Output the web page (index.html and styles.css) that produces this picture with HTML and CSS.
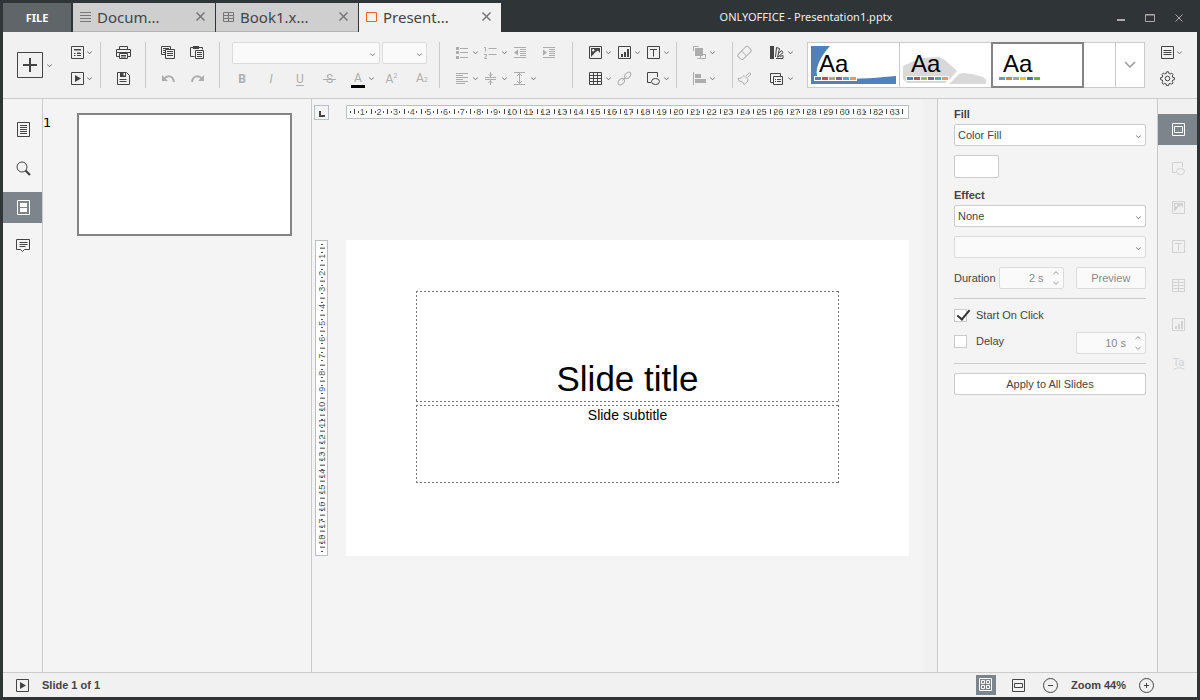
FILE: index.html
```html
<!DOCTYPE html>
<html lang="en">
<head>
<meta charset="utf-8">
<title>ONLYOFFICE - Presentation1.pptx</title>
<link rel="stylesheet" href="styles.css">
</head>
<body>
<svg class="sprite" aria-hidden="true">
  <symbol id="chev" viewBox="0 0 5 5"><path d="M0 1.3L2.5 3.8L5 1.3"/></symbol>
  <symbol id="close" viewBox="0 0 9 9"><path d="M.5.5L8.500 8.500M8.500.5L.5 8.500"/></symbol>
  <symbol id="slide-new" viewBox="0 0 15 15"><path d="M1.500 1.500h12v12h-12z"/><path d="M4 5h7M4 8.500h1.500M7 8.500h4M4 10.500h1.500M7 10.500h4"/><path d="M4 4.500h7M7 8h3"/></symbol>
  <symbol id="play" viewBox="0 0 15 15"><path d="M1.500 1.500h12v12h-12z"/><path class="solid" d="M5 4l6 3.500l-6 3.500z"/></symbol>
  <symbol id="print" viewBox="0 0 15 15"><path d="M3.500 4.500v-3h8v3M3.500 11.500h-3v-7h14v7h-3M3.500 8.500h8v5h-8zM5 10.500h5M5 12h5M0 7.500h15"/></symbol>
  <symbol id="save" viewBox="0 0 15 15"><path d="M1.500 1.500h9l3 3v9h-12zM3.500 8.500h7M3.500 10.500h7"/><path class="solid" d="M4 1h6v5h-6z"/><path class="paper" d="M7.500 2h1.500v2.500h-1.500z"/></symbol>
  <symbol id="copy" viewBox="0 0 15 15"><path d="M4.500 9.500h-4v-8h9v2.500M2 3.500h6M2 5.500h2M2 7.500h2M4.500 4.500h9v9h-9zM6 6.500h6M6 8.500h6M6 10.500h6"/></symbol>
  <symbol id="paste" viewBox="0 0 15 15"><path d="M4.500 11.500h-4v-9h12v2M5.500 5.500h8v8h-8zM7 7.500h5M7 9.500h5M7 11.500h5"/><path class="solid" d="M3 1h6v3h-6z"/></symbol>
  <symbol id="undo" viewBox="0 0 15 15"><path d="M3 8c3-4 9-4 10 3" stroke-width="2"/><path class="solid" d="M1 4v6h6z"/></symbol>
  <symbol id="redo" viewBox="0 0 15 15"><path d="M12 8c-3-4-9-4-10 3" stroke-width="2"/><path class="solid" d="M14 4v6h-6z"/></symbol>
  <symbol id="bullets" viewBox="0 0 15 15"><path d="M6 3.500h8M6 7.500h8M6 12.500h8"/><path class="solid" d="M2 2h3v3h-3zM2 6h3v3h-3zM2 11h3v3h-3z"/></symbol>
  <symbol id="numbers" viewBox="0 0 15 15"><path d="M5.500 3.500h8M5.500 9.500h8M1 2.500h1.500v4M1 9.500h2.500v1.500l-2 2v.5h2.500"/></symbol>
  <symbol id="outdent" viewBox="0 0 15 15"><path d="M2 2.500h12M8 4.500h6M8 6.500h6M8 8.500h6M8 10.500h6M2 12.500h12"/><path class="solid" d="M6 4.500v6l-4-3z"/></symbol>
  <symbol id="indent" viewBox="0 0 15 15"><path d="M2 2.500h12M8 4.500h6M8 6.500h6M8 8.500h6M8 10.500h6M2 12.500h12"/><path class="solid" d="M2 4.500v6l4-3z"/></symbol>
  <symbol id="align" viewBox="0 0 15 15"><path d="M2 2.500h12M2 4.500h7M2 6.500h12M2 8.500h7M2 10.500h12M2 12.500h9"/></symbol>
  <symbol id="valign" viewBox="0 0 15 15"><path d="M2 6.500h11M2 8.500h11M7.500 1v5M7.500 9v5M5.500 3l2 2l2-2M5.500 12l2-2l2 2"/></symbol>
  <symbol id="spacing" viewBox="0 0 15 15"><path d="M2 1.500h11M2 13.500h11M7.500 2.500v10M5 5l2.500-2.500l2.500 2.500M5 10l2.500 2.500l2.500-2.500"/></symbol>
  <symbol id="image" viewBox="0 0 15 15"><path d="M1.500 1.500h12v12h-12z"/><path class="solid" d="M3 3h9v5l-2-2.500l-2.500 1.500l-4.500 5z"/><circle class="paper" cx="5.200" cy="5.200" r="1.200"/></symbol>
  <symbol id="chart" viewBox="0 0 15 15"><path d="M1.500 1.500h12v12h-12z"/><path class="solid" d="M4 9h2v3h-2zM7 7h2v5h-2zM10 4h2v8h-2z"/></symbol>
  <symbol id="text" viewBox="0 0 15 15"><path d="M1.500 1.500h12v12h-12zM4 4.500h7M7.500 4.500v7"/></symbol>
  <symbol id="table" viewBox="0 0 15 15"><path d="M1.500 1.500h12v12h-12zM1 4.500h13M1 7.500h13M1 10.500h13M5.500 1.500v12M9.500 1.500v12"/></symbol>
  <symbol id="table2" viewBox="0 0 15 15"><path d="M1.500 1.500h12v12h-12zM1 4.500h13M1 7.500h13M1 10.500h13M7.500 1.500v12"/></symbol>
  <symbol id="link" viewBox="0 0 15 15"><ellipse cx="4.300" cy="10.700" rx="3.700" ry="2.500" transform="rotate(-45 4.300 10.700)"/><ellipse cx="10.700" cy="4.300" rx="3.700" ry="2.500" transform="rotate(-45 10.700 4.300)"/><path d="M5.500 9.500l4-4"/></symbol>
  <symbol id="shape" viewBox="0 0 15 15"><path d="M5 11.500h-3.500v-10h10v4.500"/><ellipse cx="9.500" cy="10.500" rx="4" ry="3"/></symbol>
  <symbol id="arrange" viewBox="0 0 15 15"><path d="M1.500 6v-4.500h5M13.500 9v4.500h-5M13.500 9.500h-3M5.500 13.500h3v-3"/><path class="solid" d="M3 3h8v8h-8z"/></symbol>
  <symbol id="align-obj" viewBox="0 0 15 15"><path d="M1.500 1v13"/><path class="solid" d="M3 3h6v4h-6zM3 8h11v4h-11z"/></symbol>
  <symbol id="eraser" viewBox="0 0 15 15"><rect x="0.500" y="4.500" width="14" height="7" rx="2" transform="rotate(-45 7.500 8)"/><path d="M4.500 6l5 5"/></symbol>
  <symbol id="brush" viewBox="0 0 15 15"><path d="M9 5l3.500-3.500l1.500 1.500l-3.500 3.500M7 4.500l4 4c0 2-2 4-4 5l-1.500-2.500l-4-1.500l-.5-2c3 0 4-1 6-3z"/></symbol>
  <symbol id="colors" viewBox="0 0 15 15"><path class="solid" d="M1 1h4v13h-4z"/><path d="M6.500 12l1-9.500l3 1l-2 9M9 9l3.500-3.500l1.500 2l-5 4.500M7 13.500h7v-3l-3.500 1"/></symbol>
  <symbol id="size" viewBox="0 0 15 15"><path d="M4 11.500h-2.500v-9h10v2.500M4.500 5.500h9v8h-9zM6 8.500h1M8 8.500h4M6 10.500h1M8 10.500h4"/></symbol>
  <symbol id="lines" viewBox="0 0 15 15"><path d="M1.500 1.500h12v12h-12zM3.500 5.500h8M3.500 7.500h8M3.500 9.500h8"/></symbol>
  <symbol id="gear" viewBox="0 0 15 15"><circle cx="7.500" cy="7.500" r="2.300"/><path d="M6.500.8h2l.4 1.700l1.300.5l1.500-.9l1.400 1.400l-.9 1.500l.5 1.300l1.700.4v2l-1.700.4l-.5 1.300l.9 1.500l-1.400 1.400l-1.500-.9l-1.300.5l-.4 1.700h-2l-.4-1.700l-1.300-.5l-1.500.9l-1.400-1.400l.9-1.500l-.5-1.300l-1.700-.4v-2l1.700-.4l.5-1.300l-.9-1.500l1.400-1.400l1.500.9l1.300-.5z"/></symbol>
  <symbol id="doc" viewBox="0 0 15 15"><path d="M1.500.5h12v14h-12zM4 3.500h7M4 5.500h7M4 7.500h7M4 9.500h7M4 11.500h7"/></symbol>
  <symbol id="search" viewBox="0 0 15 15"><circle cx="6" cy="6" r="5"/><path d="M9.500 9.500l4.500 4.500" stroke-width="2.200"/></symbol>
  <symbol id="slides" viewBox="0 0 15 15"><path d="M1.500.5h12v14h-12z"/><path class="solid" d="M4 3h7v4h-7zM4 8h7v4h-7z"/></symbol>
  <symbol id="comment" viewBox="0 0 15 15"><path d="M.5.500h13v10h-5l-2 2l-2-2h-4zM3.500 3.500h8M3.500 5.500h8M3.500 7.500h6"/></symbol>
  <symbol id="slide-set" viewBox="0 0 15 15"><path d="M1.500 1.500h12v12h-12zM3.500 4.500h8v6h-8z"/></symbol>
  <symbol id="fit" viewBox="0 0 15 15"><path d="M1.500 1.500h12v12h-12zM3.500 5.500h8v4h-8z"/></symbol>
  <symbol id="grid4" viewBox="0 0 15 15"><path d="M1.500 1.500h12v12h-12zM3.500 3.500h3v3h-3zM8.500 3.500h3v3h-3zM3.500 8.500h3v3h-3zM8.500 8.500h3v3h-3z"/></symbol>
  <symbol id="minus" viewBox="0 0 15 15"><circle cx="7.500" cy="7.500" r="7"/><path d="M5 7.500h5"/></symbol>
  <symbol id="plus" viewBox="0 0 15 15"><circle cx="7.500" cy="7.500" r="7"/><path d="M5 7.500h5M7.500 5v5"/></symbol>
</svg>

<header class="titlebar">
  <nav class="tabs">
    <button class="file">FILE</button>
    <div class="tab"><svg class="tab-icon" viewBox="0 0 11 11"><path d="M0 .5h11M0 3.500h11M0 6.500h11M0 9.500h11"/></svg><span class="tab-name">Docum...</span><button class="tab-close" aria-label="Close"><svg><use href="#close"/></svg></button></div>
    <div class="tab"><svg class="tab-icon" viewBox="0 0 11 11"><path d="M.5.5h10v9h-10zM0 3.500h11M0 6.500h11M5.500.5v9"/></svg><span class="tab-name">Book1.x...</span><button class="tab-close" aria-label="Close"><svg><use href="#close"/></svg></button></div>
    <div class="tab active"><svg class="tab-icon" viewBox="0 0 11 11"><path d="M.5.5h10v9h-10z"/></svg><span class="tab-name">Present...</span><button class="tab-close" aria-label="Close"><svg><use href="#close"/></svg></button></div>
  </nav>
  <h1 class="window-title">ONLYOFFICE - Presentation1.pptx</h1>
  <div class="window-buttons">
    <button aria-label="Minimize"><svg viewBox="0 0 10 10"><path d="M1 7h8" stroke-width="2"/></svg></button>
    <button aria-label="Maximize"><svg viewBox="0 0 10 10"><path d="M.5 1.500h9v7h-9zM0 2h10"/></svg></button>
    <button aria-label="Close window"><svg viewBox="0 0 10 10"><path d="M1.500 1.500l7 7M8.500 1.500l-7 7"/></svg></button>
  </div>
</header>

<div class="toolbar">
  <button class="add" aria-label="Add slide"><svg class="add-icon" viewBox="0 0 26 26"><path d="M.5.5h25v25h-25z"/><path d="M6 13h14M13 6v14" stroke-width="2"/></svg><svg class="chev"><use href="#chev"/></svg></button>
  <div class="group g-slide">
    <button aria-label="Layout"><svg class="icon"><use href="#slide-new"/></svg><svg class="chev"><use href="#chev"/></svg></button>
    <button aria-label="Preview show"><svg class="icon"><use href="#play"/></svg><svg class="chev"><use href="#chev"/></svg></button>
  </div>
  <i class="sep"></i>
  <div class="group g-file">
    <button aria-label="Print"><svg class="icon"><use href="#print"/></svg></button>
    <button aria-label="Save"><svg class="icon"><use href="#save"/></svg></button>
  </div>
  <i class="sep"></i>
  <div class="group g-clip">
    <button aria-label="Copy"><svg class="icon"><use href="#copy"/></svg></button>
    <button aria-label="Paste"><svg class="icon"><use href="#paste"/></svg></button>
    <button class="off" aria-label="Undo"><svg class="icon"><use href="#undo"/></svg></button>
    <button class="off" aria-label="Redo"><svg class="icon"><use href="#redo"/></svg></button>
  </div>
  <i class="sep"></i>
  <div class="font-group">
    <div class="combos">
      <div class="combo font-name"><input type="text" aria-label="Font" disabled><svg class="chev"><use href="#chev"/></svg></div>
      <div class="combo font-size"><input type="text" aria-label="Font size" disabled><svg class="chev"><use href="#chev"/></svg></div>
    </div>
    <div class="letters">
      <button class="bold">B</button><button class="ital">I</button><button class="under">U</button><button class="strike"><span>S</span></button><button class="color"><span>A</span><svg class="chev"><use href="#chev"/></svg></button><button class="script">A<small class="sup">2</small></button><button class="script">A<small>2</small></button>
    </div>
  </div>
  <i class="sep"></i>
  <div class="group g-para off">
    <button aria-label="Bullets"><svg class="icon"><use href="#bullets"/></svg><svg class="chev"><use href="#chev"/></svg></button>
    <button aria-label="Numbering"><svg class="icon"><use href="#numbers"/></svg><svg class="chev"><use href="#chev"/></svg></button>
    <button aria-label="Decrease indent"><svg class="icon"><use href="#outdent"/></svg></button>
    <button aria-label="Increase indent"><svg class="icon"><use href="#indent"/></svg></button>
    <button aria-label="Align"><svg class="icon"><use href="#align"/></svg><svg class="chev"><use href="#chev"/></svg></button>
    <button aria-label="Vertical align"><svg class="icon"><use href="#valign"/></svg><svg class="chev"><use href="#chev"/></svg></button>
    <button aria-label="Line spacing"><svg class="icon"><use href="#spacing"/></svg><svg class="chev"><use href="#chev"/></svg></button>
  </div>
  <i class="sep"></i>
  <div class="group g-insert">
    <button aria-label="Image"><svg class="icon"><use href="#image"/></svg><svg class="chev"><use href="#chev"/></svg></button>
    <button aria-label="Chart"><svg class="icon"><use href="#chart"/></svg><svg class="chev"><use href="#chev"/></svg></button>
    <button aria-label="Text"><svg class="icon"><use href="#text"/></svg><svg class="chev"><use href="#chev"/></svg></button>
    <button aria-label="Table"><svg class="icon"><use href="#table"/></svg><svg class="chev"><use href="#chev"/></svg></button>
    <button class="off" aria-label="Link"><svg class="icon"><use href="#link"/></svg></button>
    <button aria-label="Shape"><svg class="icon"><use href="#shape"/></svg><svg class="chev"><use href="#chev"/></svg></button>
  </div>
  <i class="sep"></i>
  <div class="group g-arrange off">
    <button aria-label="Arrange"><svg class="icon"><use href="#arrange"/></svg><svg class="chev"><use href="#chev"/></svg></button>
    <button aria-label="Align shape"><svg class="icon"><use href="#align-obj"/></svg><svg class="chev"><use href="#chev"/></svg></button>
  </div>
  <i class="sep sep-short"></i>
  <div class="group g-style">
    <button class="off" aria-label="Clear style"><svg class="icon"><use href="#eraser"/></svg></button>
    <button aria-label="Color scheme"><svg class="icon"><use href="#colors"/></svg><svg class="chev"><use href="#chev"/></svg></button>
    <button class="off" aria-label="Copy style"><svg class="icon"><use href="#brush"/></svg></button>
    <button aria-label="Slide size"><svg class="icon"><use href="#size"/></svg><svg class="chev"><use href="#chev"/></svg></button>
  </div>
  <div class="gallery">
    <button class="theme theme-wave"><span class="aa">Aa</span>
      <span class="swatches office"><i></i><i></i><i></i><i></i><i></i><i></i></span>
      <svg class="art" viewBox="0 0 85 38"><path fill="#4f81bd" d="M0 0h19C8 12 3 25 7 32c14 3 58 0 78-2v8H0z"/></svg>
    </button>
    <button class="theme theme-stone"><span class="aa">Aa</span>
      <span class="swatches office"><i></i><i></i><i></i><i></i><i></i><i></i></span>
      <svg class="art" viewBox="0 0 85 38"><path fill="#d9d9d9" d="M0 20l11-5l9-3l16-1l6 3l12 11l-7 8l-5 4H4l-4-4zM46 38l10-10l4-1l9 1l11 3q4 2 3 7z"/></svg>
    </button>
    <button class="theme selected"><span class="aa">Aa</span>
      <span class="swatches modern"><i></i><i></i><i></i><i></i><i></i><i></i></span>
    </button>
    <span class="gallery-rest"></span>
    <button class="gallery-more" aria-label="More themes"><svg viewBox="0 0 12 8"><path d="M1 1l5 5l5-5" stroke-width="1.500"/></svg></button>
  </div>
  <div class="group g-view">
    <button aria-label="View settings"><svg class="icon"><use href="#lines"/></svg><svg class="chev"><use href="#chev"/></svg></button>
    <button aria-label="Advanced settings"><svg class="icon"><use href="#gear"/></svg></button>
  </div>
</div>

<main class="work">
  <nav class="side left">
    <button aria-label="File"><svg class="icon"><use href="#doc"/></svg></button>
    <button aria-label="Search"><svg class="icon"><use href="#search"/></svg></button>
    <button class="on" aria-label="Slides"><svg class="icon"><use href="#slides"/></svg></button>
    <button aria-label="Comments"><svg class="icon"><use href="#comment"/></svg></button>
  </nav>
  <section class="thumbs"><span class="thumb-no">1</span><button class="thumb" aria-label="Slide 1"></button></section>

  <section class="editor">
    <div class="canvas">
      <button class="tab-stop" aria-label="Tab stop"><svg viewBox="0 0 13 13"><path d="M5 5v5h5" stroke-width="2"/></svg></button>
      <div class="ruler across"><span>1</span><span>2</span><span>3</span><span>4</span><span>5</span><span>6</span><span>7</span><span>8</span><span>9</span><span>10</span><span>11</span><span>12</span><span>13</span><span>14</span><span>15</span><span>16</span><span>17</span><span>18</span><span>19</span><span>20</span><span>21</span><span>22</span><span>23</span><span>24</span><span>25</span><span>26</span><span>27</span><span>28</span><span>29</span><span>30</span><span>31</span><span>32</span><span>33</span></div>
      <div class="stage">
        <div class="ruler down"><span>1</span><span>2</span><span>3</span><span>4</span><span>5</span><span>6</span><span>7</span><span>8</span><span>9</span><span>10</span><span>11</span><span>12</span><span>13</span><span>14</span><span>15</span><span>16</span><span>17</span><span>18</span></div>
        <article class="slide">
          <h2 class="holder title">Slide title</h2>
          <p class="holder subtitle">Slide subtitle</p>
        </article>
      </div>
    </div>
    <div class="scroll"></div>
  </section>

  <aside class="settings">
    <label class="head" for="fill">Fill</label>
    <div class="select"><select id="fill"><option>Color Fill</option></select><svg class="chev"><use href="#chev"/></svg></div>
    <button class="swatch" aria-label="Fill color"></button>
    <label class="head effect" for="effect">Effect</label>
    <div class="select"><select id="effect"><option>None</option></select><svg class="chev"><use href="#chev"/></svg></div>
    <div class="select variant"><select aria-label="Effect variant" disabled><option></option></select><svg class="chev"><use href="#chev"/></svg></div>
    <div class="row duration"><label for="duration">Duration</label><div class="spin short"><input id="duration" type="text" value="2 s" disabled><svg viewBox="0 0 6 14"><path d="M.5 3L3 .7L5.500 3M.5 11L3 13.300L5.500 11"/></svg></div><button class="push" disabled>Preview</button></div>
    <hr>
    <label class="check"><input type="checkbox" checked>Start On Click</label>
    <div class="row delay"><label class="check"><input type="checkbox">Delay</label><div class="spin"><input type="text" aria-label="Delay time" value="10 s" disabled><svg viewBox="0 0 6 14"><path d="M.5 3L3 .7L5.500 3M.5 11L3 13.300L5.500 11"/></svg></div></div>
    <hr>
    <button class="push apply">Apply to All Slides</button>
  </aside>

  <nav class="side right">
    <button class="on" aria-label="Slide settings"><svg class="icon"><use href="#slide-set"/></svg></button>
    <button aria-label="Shape settings"><svg class="icon"><use href="#shape"/></svg></button>
    <button aria-label="Image settings"><svg class="icon"><use href="#image"/></svg></button>
    <button aria-label="Text settings"><svg class="icon"><use href="#text"/></svg></button>
    <button aria-label="Table settings"><svg class="icon"><use href="#table2"/></svg></button>
    <button aria-label="Chart settings"><svg class="icon"><use href="#chart"/></svg></button>
    <button class="text-art">Ta<svg viewBox="0 0 12 3"><path d="M.5 2.500q5.500-3.500 11 0"/></svg></button>
  </nav>
</main>

<footer class="status">
  <button aria-label="Start show"><svg class="icon"><use href="#play"/></svg></button>
  <span class="page-no">Slide 1 of 1</span>
  <button class="fit on" aria-label="Fit slide"><svg class="icon"><use href="#grid4"/></svg></button>
  <button class="fit-width" aria-label="Fit width"><svg class="icon"><use href="#fit"/></svg></button>
  <button aria-label="Zoom out"><svg class="icon"><use href="#minus"/></svg></button>
  <span class="zoom">Zoom 44%</span>
  <button aria-label="Zoom in"><svg class="icon"><use href="#plus"/></svg></button>
</footer>
</body>
</html>
```
FILE: styles.css
```css
* { box-sizing: border-box; }

body {
  margin: 0;
  height: 100vh;
  padding: 3px;
  display: flex;
  flex-direction: column;
  background: #2f3437;
  color: #444;
  font: 11px/16px "Liberation Sans", Arial, sans-serif;
}

button {
  margin: 0;
  padding: 0;
  border: 0;
  background: none;
  color: inherit;
  font: inherit;
  flex: none;
}

svg {
  fill: none;
  stroke: currentColor;
  stroke-width: 1;
  display: block;
  flex: none;
}

.sprite { display: none; }
.solid { fill: currentColor; stroke: none; }
.paper { fill: #f1f1f1; stroke: none; }
.icon { width: 15px; height: 15px; }
.chev { width: 5px; height: 5px; color: #777; }
.off { color: #adadad; }

/* Title bar */
.titlebar {
  height: 29px;
  flex: none;
  display: flex;
  align-items: stretch;
  font-family: "Noto Sans", sans-serif;
}
.tabs { display: flex; gap: 1px; }
.file {
  width: 68px;
  margin-right: 1px;
  background: #5f6569;
  color: #fff;
  font-size: 11px;
  font-weight: 700;
  line-height: 28px;
}
.tab {
  width: 142px;
  display: flex;
  align-items: center;
  padding: 0 10px 0 7px;
  background: #cfcfcf;
  border-bottom: 1px solid #b5b5b5;
}
.tab.active { background: #f1f1f1; border-color: #f1f1f1; }
.tab-icon { width: 11px; height: 11px; color: #777; }
.active .tab-icon { color: #e2662b; }
.tab-name { flex: 1; margin-left: 6px; font-size: 15px; line-height: 28px; }
.tab-close { color: #777; padding-bottom: 2px; }
.tab-close svg { width: 9px; height: 9px; stroke-width: 1.5; }
.window-title {
  flex: 1;
  margin: 0;
  padding-right: 5px;
  text-align: center;
  color: #eee;
  font-size: 11px;
  font-weight: 400;
  line-height: 28px;
}
.window-buttons { display: flex; align-items: center; gap: 19px; padding-right: 13px; color: #aaa; }
.window-buttons svg { width: 10px; height: 10px; }

/* Toolbar */
.toolbar {
  height: 67px;
  flex: none;
  display: flex;
  align-items: flex-start;
  padding: 10px 15px 0 14px;
  background: #f1f1f1;
  border-bottom: 1px solid #cbcbcb;
}
.add { display: flex; align-items: center; gap: 4px; height: 46px; width: 53px; }
.add-icon { width: 26px; height: 26px; }
.group { display: grid; grid-auto-rows: 21px; row-gap: 5px; flex: none; }
.group button { display: flex; align-items: center; gap: 4px; }
.group .off, .font-group { color: #adadad; }
.sep { width: 1px; height: 46px; background: #cbcbcb; flex: none; }
.g-slide { width: 30px; }
.g-slide button { gap: 2px; }
.g-file { width: 29px; margin-left: 15px; }
.g-clip { grid-template-columns: 29px 29px; margin: 0 0 0 15px; }
.font-group { width: 195px; margin: 0 12px; }
.combos { display: flex; gap: 2px; }
.combo { position: relative; height: 22px; }
.font-name { flex: 1; }
.font-size { width: 45px; }
.combo input {
  width: 100%;
  height: 22px;
  border: 1px solid #dcdcdc;
  border-radius: 2px;
  background: #fafafa;
}
.combo .chev { position: absolute; right: 5px; top: 10px; }
.letters {
  display: flex;
  padding-top: 4px;
  font: 12px/20px Roboto, sans-serif;
}
.letters button { width: 29px; height: 21px; padding-right: 9px; }
.letters .bold { font-weight: 700; }
.letters .ital { font-style: italic; }
.letters .under { text-decoration: underline; text-underline-offset: 2px; }
.strike span {
  display: block;
  width: 13px;
  margin-left: 4px;
  background: linear-gradient(#adadad, #adadad) 0 10px / 100% 1px no-repeat;
}
.letters .color { display: flex; align-items: center; gap: 4px; padding: 0; margin-left: 3px; }
.color span { width: 14px; height: 18px; line-height: 18px; border-bottom: 3px solid #000; }
.color span { height: 19px; }
.letters .script { padding-right: 6px; }
.letters .script:last-child { width: 26px; padding-right: 0; }
.letters small { font-size: 7px; }
.letters .sup { vertical-align: super; line-height: 8px; }
.g-para { grid-template-columns: repeat(4, 29px); margin: 0 2px 0 14px; }
.g-insert { grid-template-columns: repeat(3, 29px); margin: 0 1px 0 15px; }
.g-insert button, .g-arrange button { gap: 3px; }
.g-arrange { width: 40px; margin-left: 15px; }
.g-style { grid-template-columns: 32px 29px; margin-left: 4px; }
.gallery {
  flex: 1;
  height: 46px;
  margin: 0 15px 0 9px;
  display: flex;
  background: #fff;
  border: 1px solid #cbcbcb;
}
.theme { position: relative; width: 92px; height: 44px; border-right: 1px solid #cbcbcb; }
.theme.selected { width: 91px; outline: 2px solid #848484; outline-offset: -1px; border: 0; }
.theme .art { position: absolute; left: 3px; top: 3px; width: 85px; height: 38px; stroke: none; }
.aa {
  position: absolute;
  z-index: 1;
  left: 11px;
  top: 7px;
  color: #000;
  font-size: 24px;
  line-height: 28px;
}
.swatches {
  position: absolute;
  z-index: 1;
  left: 6px;
  top: 33px;
  display: flex;
  gap: 1px;
  padding: 1px;
  background: #fff;
}
.swatches i { width: 6px; height: 3px; background: #4f81bd; }
.swatches i:nth-child(2) { background: #c0504d; }
.swatches i:nth-child(3) { background: #9bbb59; }
.swatches i:nth-child(4) { background: #8064a2; }
.swatches i:nth-child(5) { background: #4bacc6; }
.swatches i:nth-child(6) { background: #f79646; }
.modern i { background: #5b9bd5; }
.modern i:nth-child(2) { background: #ed7d31; }
.modern i:nth-child(3) { background: #a5a5a5; }
.modern i:nth-child(4) { background: #ffc000; }
.modern i:nth-child(5) { background: #4472c4; }
.modern i:nth-child(6) { background: #70ad47; }
.gallery-rest { flex: 1; border-right: 1px solid #cbcbcb; }
.gallery-more { width: 28px; display: flex; align-items: center; justify-content: center; color: #999; }
.gallery-more svg { width: 12px; height: 8px; }
.g-view { width: 22px; }
.g-view button { gap: 2px; }

/* Work area */
.work { flex: 1; min-height: 0; display: flex; background: #f4f4f4; }
.side { width: 40px; flex: none; display: flex; flex-direction: column; gap: 8px; padding-top: 15px; }
.side button { height: 31px; display: flex; align-items: center; justify-content: center; padding-left: 2px; }
.side .on, .status .on { background: #7d858c; color: #fff; }
.side.left { border-right: 1px solid #cbcbcb; }
.side.right { border-left: 1px solid #cbcbcb; background: #f1f1f1; color: #d2d2d2; }
.side .text-art { flex-direction: column; font-size: 11px; line-height: 10px; }
.text-art svg { width: 12px; height: 3px; }
.thumbs {
  width: 269px;
  flex: none;
  display: flex;
  align-items: flex-start;
  padding: 14px 19px 0 0;
  border-right: 1px solid #cbcbcb;
}
.thumb-no { width: 34px; color: #000; font: 13px/20px "DejaVu Sans", sans-serif; }
.thumb { flex: 1; aspect-ratio: 215 / 123; background: #fff; border: 2px solid #848484; }

/* Editor */
.editor { flex: 1; min-width: 0; display: flex; }
.scroll { width: 14px; background: #f1f1f1; }
.canvas {
  flex: 1;
  min-width: 0;
  display: grid;
  grid-template: 19px 1fr / 32px 1fr;
  padding: 6px 14px 0 2px;
}
.tab-stop { width: 15px; height: 15px; border: 1px solid #bbbec2; }
.tab-stop svg { width: 13px; height: 13px; }
.stage {
  grid-column: 1 / 3;
  align-self: center;
  display: grid;
  grid-template-columns: 32px 1fr;
}
.ruler { position: relative; display: grid; background: #fff; border: 1px solid #bbbec2; color: #555; font-size: 9px; line-height: 12px; }
.ruler span { display: flex; align-items: center; justify-content: center; position: relative; }
.ruler::before, .ruler::after, .ruler span::before, .ruler span:last-child::after { content: ""; position: absolute; background: #444; }
.across { height: 14px; grid-auto-flow: column; grid-auto-columns: minmax(0, 1fr); padding: 0 5px 0 7px; }
.across span {
  background: linear-gradient(90deg, transparent 4px, #555 4px, #555 5px, transparent 5px, transparent 12px, #555 12px, #555 13px, transparent 13px) 0 5px / 100% 2px no-repeat;
}
.across::before { left: 3px; top: 5px; width: 1px; height: 2px; }
.across::after { display: none; }
.across span::before { left: 0; top: 3px; width: 1px; height: 5px; }
.across span:last-child::after { right: 0; top: 3px; width: 1px; height: 5px; }
.down { width: 13px; margin-left: 1px; grid-auto-rows: minmax(0, 1fr); padding: 7px 0; }
.down span {
  writing-mode: vertical-rl;
  transform: rotate(180deg);
  background: linear-gradient(transparent 4px, #555 4px, #555 5px, transparent 5px, transparent 12px, #555 12px, #555 13px, transparent 13px) 5px 0 / 2px 100% no-repeat;
}
.down::before { left: 5px; top: 3px; width: 2px; height: 1px; }
.down::after { left: 5px; bottom: 3px; width: 2px; height: 1px; }
.down span::before { left: 3px; bottom: 0; width: 5px; height: 1px; }
.down span:last-child::after { left: 3px; top: 0; width: 5px; height: 1px; }
.slide {
  aspect-ratio: 563 / 316;
  display: flex;
  flex-direction: column;
  gap: 3px;
  padding: 51px 70px 73px;
  background: #fff;
}
.holder {
  margin: 0;
  padding: 1px;
  color: #000;
  text-align: center;
  font-weight: 400;
  background:
    repeating-linear-gradient(90deg, #777 0 2px, transparent 2px 4px) top / 100% 1px no-repeat,
    repeating-linear-gradient(90deg, #777 0 2px, transparent 2px 4px) bottom / 100% 1px no-repeat,
    repeating-linear-gradient(#777 0 2px, transparent 2px 4px) left / 1px 100% no-repeat,
    repeating-linear-gradient(#777 0 2px, transparent 2px 4px) right / 1px 100% no-repeat;
}
.title { flex: 111; display: flex; align-items: flex-end; justify-content: center; font-size: 35px; line-height: 44px; }
.subtitle { flex: 78; font-size: 14px; line-height: 18px; }

/* Slide settings */
.settings {
  width: 220px;
  flex: none;
  display: flex;
  flex-direction: column;
  padding: 7px 11px 0 16px;
  border-left: 1px solid #cbcbcb;
}
.head { font-weight: 700; line-height: 16px; margin-bottom: 2px; }
.effect { margin-top: 9px; }
.select { position: relative; }
.select select {
  width: 100%;
  height: 22px;
  display: block;
  padding: 0 3px;
  appearance: none;
  border: 1px solid #cbcbcb;
  border-radius: 2px;
  background: #fff;
  color: #444;
  font: inherit;
}
.select .chev { position: absolute; right: 5px; top: 10px; }
.variant { margin-top: 9px; }
.select select:disabled { background: #fafafa; border-color: #dcdcdc; opacity: 1; }
.swatch { width: 45px; height: 23px; margin-top: 9px; background: #fff; border: 1px solid #cbcbcb; border-radius: 2px; }
.row { display: flex; align-items: flex-start; justify-content: space-between; }
.duration { align-items: center; margin-top: 9px; }
.spin { position: relative; width: 70px; }
.spin.short { width: 65px; margin: 0 12px 0 3px; }
.spin input {
  width: 100%;
  height: 22px;
  display: block;
  padding: 0 19px 0 4px;
  border: 1px solid #dcdcdc;
  border-radius: 2px;
  background: #fafafa;
  color: #8a8a8a;
  font: inherit;
  text-align: right;
}
.spin svg { position: absolute; right: 5px; top: 4px; width: 6px; height: 14px; color: #999; }
.push { height: 22px; background: #fff; border: 1px solid #cbcbcb; border-radius: 2px; }
.push:disabled { flex: 1; background: #fafafa; border-color: #dcdcdc; color: #8a8a8a; }
hr { width: 100%; height: 1px; margin: 9px 0 8px; border: 0; background: #cbcbcb; }
.delay + hr { margin-bottom: 9px; }
.check { display: flex; align-items: center; gap: 9px; }
.check input { position: relative; appearance: none; width: 13px; height: 13px; margin: 0; border: 1px solid #cbcbcb; background: #fff; }
.check input:checked::after {
  content: "";
  position: absolute;
  left: 5px;
  top: -3px;
  width: 5px;
  height: 11px;
  border: solid #333;
  border-width: 0 2px 2px 0;
  transform: rotate(40deg);
}
.delay { margin-top: 9px; }
.delay .check { padding-top: 1px; }

/* Status bar */
.status {
  height: 25px;
  flex: none;
  display: flex;
  align-items: center;
  padding: 0 43px 0 12px;
  background: #f1f1f1;
  border-top: 1px solid #cbcbcb;
  font-weight: 700;
}
.page-no { flex: 1; margin-left: 12px; }
.status .fit { width: 20px; height: 20px; padding: 2px 3px 3px 2px; }
.fit-width { margin: 0 17px 0 15px; }
.zoom { margin: 0 13px; }
```
